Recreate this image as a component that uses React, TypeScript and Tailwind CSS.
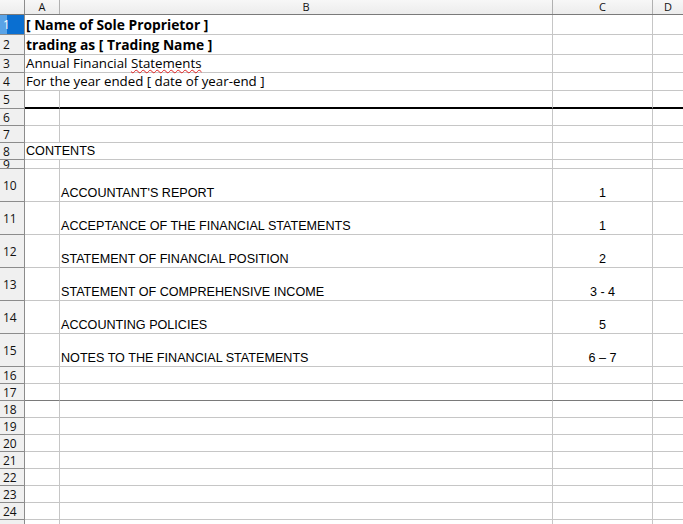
import React from "react";

type RowProps = {
  num: number;
  h: string;
  bottom?: string;
  selected?: boolean;
  overflow?: boolean;
  a?: React.ReactNode;
  b?: React.ReactNode;
  c?: React.ReactNode;
};

const vline = "border-r border-r-[#c6c6c6]";

const Row = ({ num, h, bottom, selected, overflow, a, b, c }: RowProps) => {
  const line = bottom ?? "border-b border-b-[#c6c6c6]";
  return (
    <div className="flex">
      <div
        className={`${h} w-[25px] shrink-0 border-r border-b border-[#8c8c8c] flex items-center overflow-hidden pl-[3px] text-[12px] leading-[15px] font-['Open_Sans',sans-serif] ${
          selected ? "bg-[linear-gradient(90deg,#5aa3e6_0,#5aa3e6_7px,#0a6fd1_7px)] text-white" : "bg-[#f0f0f0] text-[#111]"
        }`}
      >
        {num}
      </div>
      <div className={`${h} w-[35px] shrink-0 ${line} ${overflow ? "" : vline} relative`}>
        {a && <div className="absolute left-[1px] bottom-0 whitespace-nowrap z-10">{a}</div>}
      </div>
      <div className={`${h} w-[493px] shrink-0 ${line} ${vline} flex items-end pl-[1px]`}>{b}</div>
      <div className={`${h} w-[100px] shrink-0 ${line} ${vline} flex items-end justify-center`}>{c}</div>
      <div className={`${h} flex-1 ${line}`} />
    </div>
  );
};

const calib = "font-['Open_Sans',sans-serif] text-black";
const arial = "font-['Liberation_Sans',Arial,sans-serif] text-[12.6px] text-black leading-[13px]";

const contents: [string, string][] = [
  ["ACCOUNTANT'S REPORT", "1"],
  ["ACCEPTANCE OF THE FINANCIAL STATEMENTS", "1"],
  ["STATEMENT OF FINANCIAL POSITION", "2"],
  ["STATEMENT OF COMPREHENSIVE INCOME", "3 - 4"],
  ["ACCOUNTING POLICIES", "5"],
  ["NOTES TO THE FINANCIAL STATEMENTS", "6 – 7"],
];

const App = () => {
  return (
    <div className="w-[683px] h-[524px] overflow-hidden bg-white select-none">
      {/* column headers */}
      <div className="flex h-[15px] border-b border-[#7a7a7a] bg-[linear-gradient(#f7f7f7,#ececec)] font-['Open_Sans',sans-serif] text-[11px] leading-[14px] text-[#111]">
        <div className="w-[25px] shrink-0 border-r border-[#8c8c8c]" />
        <div className="w-[35px] shrink-0 border-r border-[#b0b0b0] text-center">A</div>
        <div className="w-[493px] shrink-0 border-r border-[#b0b0b0] text-center">B</div>
        <div className="w-[100px] shrink-0 border-r border-[#b0b0b0] text-center">C</div>
        <div className="flex-1 text-center">D</div>
      </div>

      <Row num={1} h="h-[20px]" selected overflow a={<span className={`${calib} block text-[13.8px] font-bold leading-[19px]`}>[ Name of Sole Proprietor ]</span>} />
      <Row num={2} h="h-[20px]" overflow a={<span className={`${calib} block text-[13.8px] font-bold leading-[19px]`}>trading as [ Trading Name ]</span>} />
      <Row
        num={3}
        h="h-[18px]"
        overflow
        a={
          <span className={`${calib} block text-[13.3px] leading-[17px]`}>
            Annual Financial{" "}
            <span className="underline decoration-wavy decoration-[#e02020] decoration-1 underline-offset-[1px]">Statements</span>
          </span>
        }
      />
      <Row num={4} h="h-[18px]" overflow a={<span className={`${calib} block text-[13.3px] leading-[17px]`}>For the year ended [ date of year-end ]</span>} />
      <Row num={5} h="h-[18px]" bottom="border-b-2 border-b-black" />
      <Row num={6} h="h-[17px]" />
      <Row num={7} h="h-[17px]" />
      <Row num={8} h="h-[17px]" overflow a={<span className={`${arial} block pb-[1px]`}>CONTENTS</span>} />
      <Row num={9} h="h-[9px]" />
      {contents.map(([title, page], i) => (
        <Row
          key={title}
          num={10 + i}
          h="h-[33px]"
          b={<span className={`${arial} pb-[1px]`}>{title}</span>}
          c={<span className={`${arial} pb-[1px]`}>{page}</span>}
        />
      ))}
      {Array.from({ length: 9 }).map((_, i) => (
        <Row key={i} num={16 + i} h="h-[17px]" bottom={i === 1 ? "border-b border-b-[#7a7a7a]" : undefined} />
      ))}
      <Row num={25} h="h-[17px]" />
    </div>
  );
};

export default App;
